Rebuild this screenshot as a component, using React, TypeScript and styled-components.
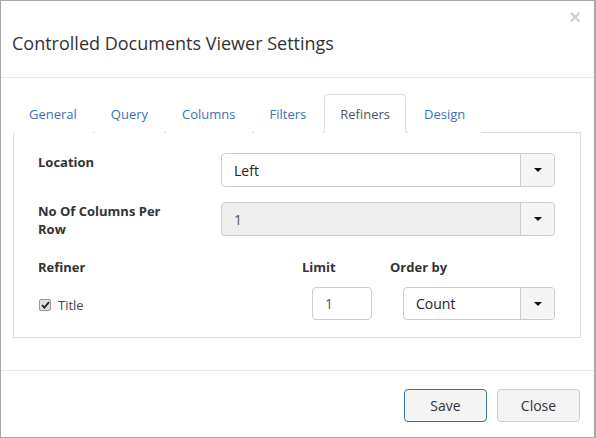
import React, { useState } from 'react';
import styled, { createGlobalStyle } from 'styled-components';

const GlobalStyle = createGlobalStyle`
  * { box-sizing: border-box; }
  html, body { margin: 0; padding: 0; background: #fff; }
  body { font-family: 'Open Sans', 'Liberation Sans', sans-serif; color: #333; }
`;

const Modal = styled.div`
  width: 596px;
  height: 438px;
  border: 1px solid #a8a8a8;
  border-right-width: 2px;
  background: #fff;
  display: flex;
  flex-direction: column;
  position: relative;
`;

const Header = styled.div`
  height: 77px;
  flex: none;
  border-bottom: 1px solid #e5e5e5;
  padding: 29px 0 0 11px;
`;

const Title = styled.h4`
  margin: 0;
  font-size: 18px;
  line-height: 26px;
  font-weight: 400;
  color: #333;
`;

const CloseX = styled.button`
  position: absolute;
  top: 3px;
  right: 13px;
  border: none;
  background: transparent;
  padding: 0;
  font-family: 'Liberation Sans', sans-serif;
  font-size: 20px;
  font-weight: 700;
  line-height: 26px;
  color: #000;
  opacity: 0.18;
  cursor: pointer;
`;

const Body = styled.div`
  flex: 1;
  padding: 16px 13px 0 12px;
`;

const TabList = styled.div`
  display: flex;
  height: 39px;
  border-bottom: 1px solid #ddd;
`;

const Tab = styled.button<{ $active?: boolean }>`
  font-family: inherit;
  font-size: 13px;
  line-height: 18px;
  padding: 10px 15px;
  margin-right: 2px;
  margin-bottom: -1px;
  height: 39px;
  background: #fff;
  color: ${(p) => (p.$active ? '#555' : '#3a72b5')};
  border: 1px solid ${(p) => (p.$active ? '#ddd' : 'transparent')};
  border-bottom-color: ${(p) => (p.$active ? '#fff' : 'transparent')};
  border-radius: 4px 4px 0 0;
  cursor: pointer;
`;

const Panel = styled.div`
  border: 1px solid #ddd;
  border-top: none;
  height: 205px;
  padding: 20px 25px 0 24px;
`;

const FormRow = styled.div<{ $gap: number }>`
  display: flex;
  align-items: flex-start;
  margin-bottom: ${(p) => p.$gap}px;
`;

const Label = styled.label<{ $width?: number }>`
  width: ${(p) => p.$width ?? 183}px;
  padding-right: 40px;
  flex: none;
  font-size: 13px;
  line-height: 18px;
  font-weight: 700;
  color: #333;
`;

const SelectBox = styled.div<{ $disabled?: boolean; $height?: number }>`
  flex: 1;
  display: flex;
  height: ${(p) => p.$height ?? 34}px;
  border: 1px solid #ccc;
  border-radius: 4px;
  overflow: hidden;
  background: ${(p) => (p.$disabled ? '#eee' : '#fff')};
`;

const SelectValue = styled.div<{ $muted?: boolean }>`
  flex: 1;
  display: flex;
  align-items: center;
  padding-left: 12px;
  font-size: 14px;
  color: ${(p) => (p.$muted ? '#555' : '#222')};
`;

const Caret = styled.div`
  width: 34px;
  flex: none;
  border-left: 1px solid #ccc;
  background: #f5f5f5;
  display: flex;
  align-items: center;
  justify-content: center;

  &::after {
    content: '';
    border-left: 4px solid transparent;
    border-right: 4px solid transparent;
    border-top: 4px solid #111;
  }
`;

const RefinerHead = styled.div`
  display: flex;
  margin-top: 20px;
`;

const HeadCell = styled.div<{ $width?: number }>`
  width: ${(p) => (p.$width ? `${p.$width}px` : 'auto')};
  flex: none;
  font-size: 13px;
  line-height: 18px;
  font-weight: 700;
`;

const RefinerRow = styled.div`
  display: flex;
  align-items: center;
  margin-top: 11px;
`;

const CheckCell = styled.label`
  width: 274px;
  flex: none;
  display: flex;
  align-items: center;
  gap: 7px;
  padding-top: 3px;
  font-size: 13px;
  color: #444;
  padding-left: 1px;
`;

const CheckBox = styled.span`
  width: 12px;
  height: 12px;
  border: 1px solid #999;
  border-radius: 2px;
  background: #dedede;
  display: flex;
  align-items: center;
  justify-content: center;
`;

const LimitInput = styled.div`
  width: 60px;
  height: 33px;
  flex: none;
  border: 1px solid #ccc;
  border-radius: 4px;
  display: flex;
  align-items: center;
  padding-left: 12px;
  font-size: 14px;
  color: #555;
  margin-right: 31px;
`;

const Footer = styled.div`
  height: 67px;
  flex: none;
  border-top: 1px solid #e5e5e5;
  display: flex;
  justify-content: flex-end;
  align-items: flex-start;
  gap: 10px;
  padding: 18px 14px 0 0;
`;

const Button = styled.button<{ $primary?: boolean }>`
  width: 83px;
  height: 33px;
  font-family: inherit;
  font-size: 14px;
  color: #333;
  background: #f4f4f4;
  border: 1px solid ${(p) => (p.$primary ? '#3b6fa8' : '#ccc')};
  border-radius: 4px;
  cursor: pointer;
`;

const tabs = ['General', 'Query', 'Columns', 'Filters', 'Refiners', 'Design'];

const App: React.FC = () => {
  const [active, setActive] = useState('Refiners');

  return (
    <>
      <GlobalStyle />
      <Modal>
        <CloseX>×</CloseX>
        <Header>
          <Title>Controlled Documents Viewer Settings</Title>
        </Header>
        <Body>
          <TabList>
            {tabs.map((t) => (
              <Tab key={t} $active={t === active} onClick={() => setActive(t)}>
                {t}
              </Tab>
            ))}
          </TabList>
          <Panel>
            <FormRow $gap={15}>
              <Label>Location</Label>
              <SelectBox>
                <SelectValue>Left</SelectValue>
                <Caret />
              </SelectBox>
            </FormRow>
            <FormRow $gap={0}>
              <Label>No Of Columns Per Row</Label>
              <SelectBox $disabled>
                <SelectValue $muted>1</SelectValue>
                <Caret />
              </SelectBox>
            </FormRow>
            <RefinerHead>
              <HeadCell $width={264}>Refiner</HeadCell>
              <HeadCell $width={88}>Limit</HeadCell>
              <HeadCell>Order by</HeadCell>
            </RefinerHead>
            <RefinerRow>
              <CheckCell>
                <CheckBox>
                  <svg width="9" height="8" viewBox="0 0 9 8">
                    <path d="M1 4.2 L3.4 6.6 L8 1.2" fill="none" stroke="#222" strokeWidth="1.8" />
                  </svg>
                </CheckBox>
                Title
              </CheckCell>
              <LimitInput>1</LimitInput>
              <SelectBox $height={33}>
                <SelectValue>Count</SelectValue>
                <Caret />
              </SelectBox>
            </RefinerRow>
          </Panel>
        </Body>
        <Footer>
          <Button $primary>Save</Button>
          <Button>Close</Button>
        </Footer>
      </Modal>
    </>
  );
};

export default App;
